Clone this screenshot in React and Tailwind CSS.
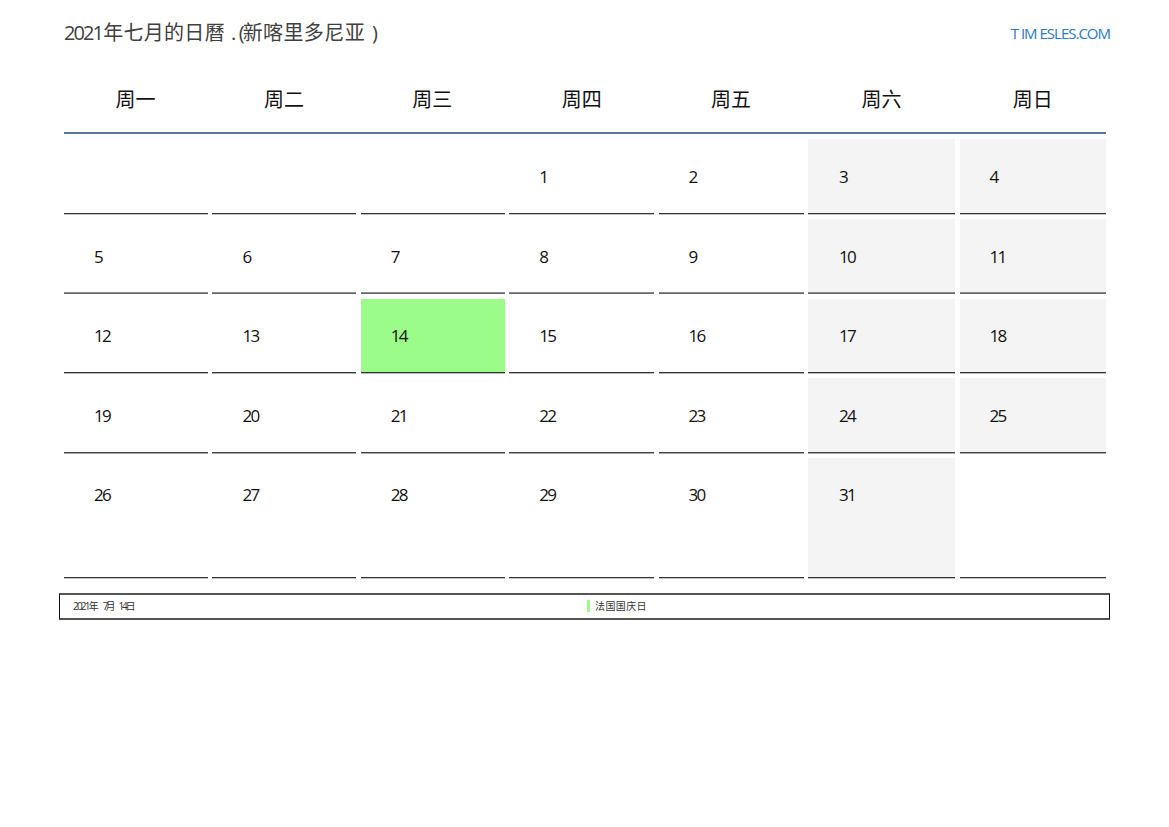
const F = { fontFamily: '"Open Sans","Noto Sans CJK SC",sans-serif' };
const cols = "grid grid-cols-[144px_144px_144px_145px_145px_147.2px_146.4px] gap-x-[4.4px]";
const heads = ["周一","周二","周三","周四","周五","周六","周日"];
const rows = [
  { h: "h-[74.6px]", line: "border-[#333333] shadow-[0_1px_0_#c4c4c4]", d: ["", "", "", 1, 2, 3, 4] },
  { h: "h-[74.6px]", line: "border-[#666666] shadow-[inset_0_-1px_0_#8a8a8a]", d: [5, 6, 7, 8, 9, 10, 11] },
  { h: "h-[74.6px]", line: "border-[#333333] shadow-[0_1px_0_#b8b8b8]", d: [12, 13, 14, 15, 16, 17, 18] },
  { h: "h-[74.6px]", line: "border-[#444444] shadow-[0_1px_0_#a8a8a8]", d: [19, 20, 21, 22, 23, 24, 25] },
  { h: "h-[120px]", line: "border-[#333333] shadow-[0_1px_0_#c4c4c4]", d: [26, 27, 28, 29, 30, 31, ""] },
];
function Cell({ v, col, h, line }) {
  const weekend = (col === 5 || col === 6) && v !== "";
  const bg = v === 14 ? "bg-[#9bfc8a]" : weekend ? "bg-[#f4f4f4]" : "";
  const pl = col === 5 ? "pl-[31px]" : "pl-[30px]";
  return (
    <div className={`${h} ${bg} border-b ${line} ${pl} pt-[25.7px] text-[17px] leading-[24px] tracking-[-1.7px] text-[#111111]`}>
      {v}
    </div>
  );
}
export default function App() {
  return (
    <div style={F} className="w-[1169px] h-[827px] bg-white relative overflow-hidden">
      <div className="pl-[64px] pr-[59px] pt-[19px] flex justify-between items-start h-[64px]">
        <div className="text-[20px] leading-[28px] text-[#404040] whitespace-pre">
          <span className="tracking-[-1.9px]">2021</span>
          <span className="tracking-[0.3px] ml-[1px]">年七月的日曆</span>
          <span className="ml-[6px] tracking-[-0.5px]">.</span>
          <span className="ml-[3px]">(</span>
          <span className="tracking-[0.4px] ml-[-2px]">新喀里多尼亚</span>
          <span className="ml-[7px]">)</span>
        </div>
        <div className="text-[15px] leading-[28px] text-[#2a78c6] tracking-[-1px] whitespace-pre">T IM ESLES.COM</div>
      </div>
      <div className="pl-[64px]">
        <div className={`${cols} w-[1042px] h-[70px] border-b-2 border-[#56789f]`}>
          {heads.map((t, i) => (
            <div key={t} className={`${i < 3 ? "pr-[1px]" : ""} text-center text-[20px] leading-[28px] pt-[22px] text-[#111111]`}>{t}</div>
          ))}
        </div>
        <div className="pt-[5.4px] flex flex-col gap-y-[5px] w-[1042px]">
          {rows.map((r, i) => (
            <div key={i} className={cols}>
              {r.d.map((v, c) => <Cell key={c} v={v} col={c} h={r.h} line={r.line} />)}
            </div>
          ))}
        </div>
      </div>
      <div className="ml-[59px] mt-[15px] w-[1051px] h-[27px] border-x border-x-[#111111] border-y-2 border-y-[#555555] flex items-center text-[10px] text-[#333333]">
        <div className="w-[527px] pl-[13px] whitespace-pre">
          <span className="tracking-[-1.8px]">2021</span>
          <span>年</span>
          <span className="ml-[4px] tracking-[-3px]">7</span>
          <span>月</span>
          <span className="ml-[3px] tracking-[-2.2px]">14</span>
          <span>日</span>
        </div>
        <div className="w-[3px] h-[12px] bg-[#9bfc8a]"></div>
        <div className="pl-[5px] tracking-[0.4px]">法国国庆日</div>
      </div>
    </div>
  );
}
